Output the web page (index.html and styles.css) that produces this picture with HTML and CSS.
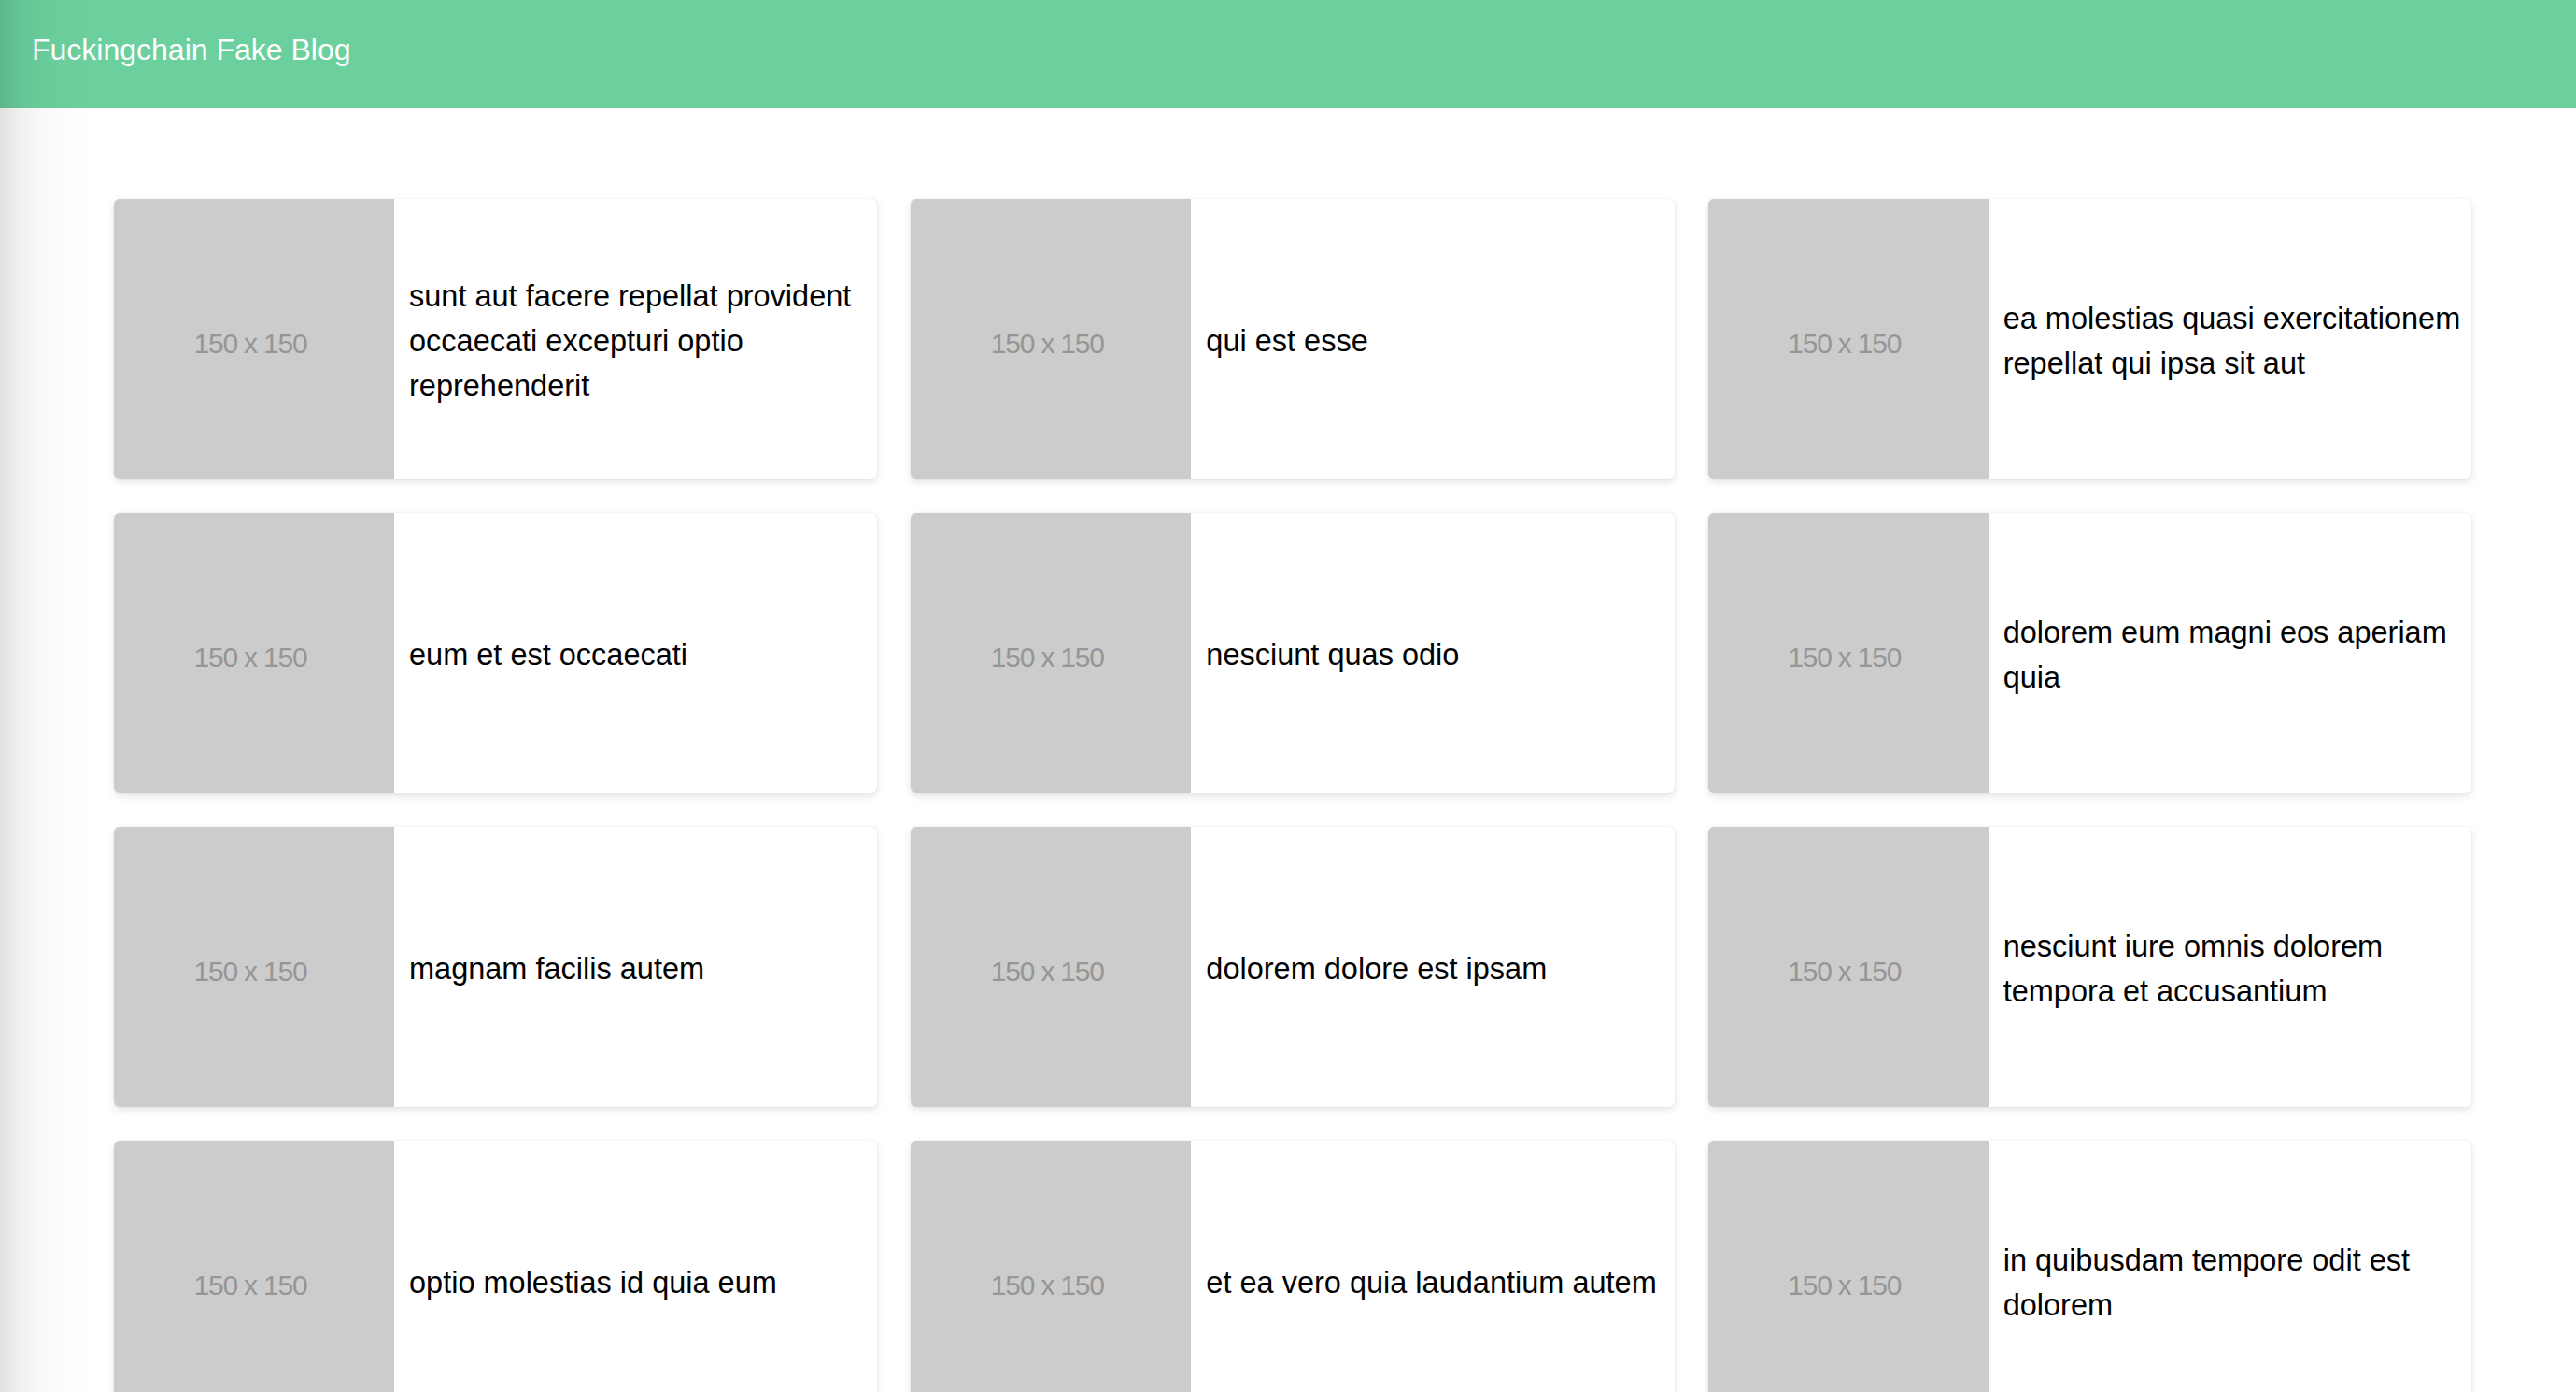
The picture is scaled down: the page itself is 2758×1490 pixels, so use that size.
FILE: index.html
```html
<!DOCTYPE html>
<html lang="en">
<head>
<meta charset="utf-8">
<title>Fuckingchain Fake Blog</title>
<link rel="stylesheet" href="styles.css">
</head>
<body>
<header class="appbar">
  <h1 class="appbar-title">Fuckingchain Fake Blog</h1>
</header>
<main class="posts">
  <article class="card"><div class="thumb">150 x 150</div><div class="card-body">sunt aut facere repellat provident occaecati excepturi optio reprehenderit</div></article>
  <article class="card"><div class="thumb">150 x 150</div><div class="card-body">qui est esse</div></article>
  <article class="card"><div class="thumb">150 x 150</div><div class="card-body">ea molestias quasi exercitationem repellat qui ipsa sit aut</div></article>
  <article class="card"><div class="thumb">150 x 150</div><div class="card-body">eum et est occaecati</div></article>
  <article class="card"><div class="thumb">150 x 150</div><div class="card-body">nesciunt quas odio</div></article>
  <article class="card"><div class="thumb">150 x 150</div><div class="card-body">dolorem eum magni eos aperiam quia</div></article>
  <article class="card"><div class="thumb">150 x 150</div><div class="card-body">magnam facilis autem</div></article>
  <article class="card"><div class="thumb">150 x 150</div><div class="card-body">dolorem dolore est ipsam</div></article>
  <article class="card"><div class="thumb">150 x 150</div><div class="card-body">nesciunt iure omnis dolorem tempora et accusantium</div></article>
  <article class="card"><div class="thumb">150 x 150</div><div class="card-body">optio molestias id quia eum</div></article>
  <article class="card"><div class="thumb">150 x 150</div><div class="card-body">et ea vero quia laudantium autem</div></article>
  <article class="card"><div class="thumb">150 x 150</div><div class="card-body">in quibusdam tempore odit est dolorem</div></article>
</main>
<div class="edge-shadow"></div>
</body>
</html>
```
FILE: styles.css
```css
* { box-sizing: border-box; }

html, body {
  margin: 0;
  padding: 0;
  background: #ffffff;
  font-family: "Liberation Sans", Arial, sans-serif;
  color: #000;
}

.appbar {
  height: 116px;
  background: #6bd09e;
  display: flex;
  align-items: center;
  padding: 0 0 9px 34px;
}

.appbar-title {
  margin: 0;
  font-size: 32px;
  font-weight: 400;
  color: #ffffff;
  line-height: normal;
}

.posts {
  display: grid;
  grid-template-columns: repeat(3, 1fr);
  column-gap: 36px;
  row-gap: 36px;
  padding: 97px 112px 40px 122px;
}

.card {
  display: flex;
  height: 300px;
  background: #fff;
  border-radius: 6px;
  overflow: hidden;
  box-shadow: 0 0 1px rgba(0,0,0,0.16), 0 3px 8px rgba(0,0,0,0.11);
}

.thumb {
  flex: 0 0 300px;
  height: 300px;
  background: #cccccc;
  color: #969696;
  display: flex;
  align-items: center;
  justify-content: center;
  font-size: 30px;
  letter-spacing: -1.2px;
  padding: 9px 8px 0 0;
}

.card-body {
  flex: 1;
  display: flex;
  align-items: center;
  padding: 3px 8px 0 16px;
  font-size: 32.5px;
  line-height: 48px;
}

.edge-shadow {
  position: fixed;
  left: 0;
  top: 0;
  bottom: 0;
  width: 100px;
  pointer-events: none;
  background: linear-gradient(to right,
    rgba(0,0,0,0.12) 0px,
    rgba(0,0,0,0.06) 20px,
    rgba(0,0,0,0.025) 45px,
    rgba(0,0,0,0.008) 70px,
    rgba(0,0,0,0) 100px);
}
```
